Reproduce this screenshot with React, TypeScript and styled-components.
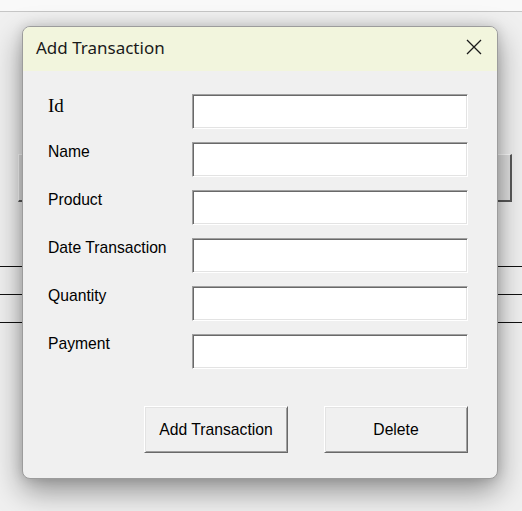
import React from "react";
import styled, { createGlobalStyle } from "styled-components";

const GlobalStyle = createGlobalStyle`
  html, body { margin: 0; padding: 0; background: #f0f0f0; }
  * { box-sizing: border-box; }
`;

const Page = styled.div`
  position: relative;
  width: 522px;
  height: 511px;
  overflow: hidden;
  background: #f0f0f0;
`;

const TopStrip = styled.div`
  height: 12px;
  background: #f9f9f9;
  border-bottom: 1px solid #c6c6c6;
`;

const BgArea = styled.div`
  padding: 142px 10px 0 18px;
`;

const BgButton = styled.div`
  height: 48px;
  background: #e1e1e1;
  border-style: solid;
  border-width: 1px 2px 2px 1px;
  border-color: #ffffff #5a5a5a #5a5a5a #ffffff;
`;

const BgLines = styled.div`
  display: flex;
  flex-direction: column;
  gap: 27px;
  padding-top: 64px;
`;

const BgLine = styled.div`
  height: 1px;
  background: #111;
`;

const Dialog = styled.div`
  position: absolute;
  left: 22px;
  top: 26px;
  width: 476px;
  height: 453px;
  border: 1px solid #9c9c9c;
  border-radius: 8px;
  background: #f0f0f0;
  overflow: hidden;
  box-shadow: 0 12px 30px rgba(0, 0, 0, 0.4), 0 0 12px rgba(0, 0, 0, 0.14);
  display: flex;
  flex-direction: column;
`;

const TitleBar = styled.div`
  height: 44px;
  background: #f2f5dd;
  display: flex;
  align-items: center;
  justify-content: space-between;
  padding: 0 15px 4px 13px;
`;

const Title = styled.span`
  font-family: "Noto Sans", "Open Sans", sans-serif;
  font-size: 17px;
  color: #1a1a1a;
`;

const CloseButton = styled.button`
  width: 17px;
  height: 17px;
  border: none;
  background: transparent;
  padding: 0;
  display: flex;
  align-items: center;
  justify-content: center;
`;

const Body = styled.div`
  flex: 1;
  display: flex;
  flex-direction: column;
  padding: 23px 29px 0 25px;
`;

const Form = styled.div`
  display: grid;
  grid-template-columns: 144px 276px;
  row-gap: 13px;
`;

const Label = styled.label<{ $serif?: boolean }>`
  font-family: ${(p) =>
    p.$serif ? `"Liberation Serif", serif` : `"Liberation Sans", Arial, sans-serif`};
  font-size: ${(p) => (p.$serif ? "19px" : "15.7px")};
  color: #000;
  line-height: 18px;
  padding-top: ${(p) => (p.$serif ? "3px" : "1px")};
`;

const TextBox = styled.input`
  height: 35px;
  width: 276px;
  background: #fff;
  border-style: solid;
  border-width: 1px;
  border-color: #a0a0a0 #ffffff #ffffff #a0a0a0;
  box-shadow: inset 1px 1px #696969, inset -1px -1px #e3e3e3;
  outline: none;
  padding: 0 4px;
  font-family: "Liberation Sans", Arial, sans-serif;
  font-size: 15px;
`;

const Buttons = styled.div`
  display: flex;
  justify-content: flex-end;
  gap: 36px;
  padding-top: 37px;
`;

const Button = styled.button`
  width: 144px;
  height: 47px;
  background: #f0f0f0;
  border-style: solid;
  border-width: 1px;
  border-color: #ffffff #696969 #696969 #ffffff;
  box-shadow: inset 1px 1px #e3e3e3, inset -1px -1px #a0a0a0;
  font-family: "Liberation Sans", Arial, sans-serif;
  font-size: 15.7px;
  color: #000;
  padding: 0;
`;

const fields = ["Id", "Name", "Product", "Date Transaction", "Quantity", "Payment"];

export default function App() {
  return (
    <Page>
      <GlobalStyle />
      <TopStrip />
      <BgArea>
        <BgButton />
      </BgArea>
      <BgLines>
        <BgLine />
        <BgLine />
        <BgLine />
      </BgLines>
      <Dialog>
        <TitleBar>
          <Title>Add Transaction</Title>
          <CloseButton aria-label="Close">
            <svg width="16" height="16" viewBox="0 0 16 16">
              <path d="M1 1 L15 15 M15 1 L1 15" stroke="#1a1a1a" strokeWidth="1.3" fill="none" />
            </svg>
          </CloseButton>
        </TitleBar>
        <Body>
          <Form>
            {fields.map((f) => (
              <React.Fragment key={f}>
                <Label $serif={f === "Id"}>{f}</Label>
                <TextBox type="text" />
              </React.Fragment>
            ))}
          </Form>
          <Buttons>
            <Button>Add Transaction</Button>
            <Button>Delete</Button>
          </Buttons>
        </Body>
      </Dialog>
    </Page>
  );
}
